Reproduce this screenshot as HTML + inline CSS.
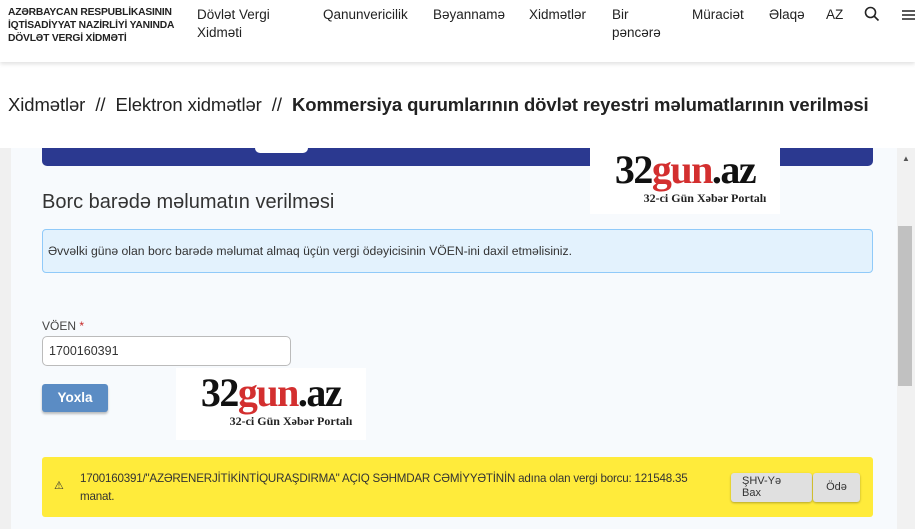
<!DOCTYPE html>
<html><head><meta charset="utf-8"><style>
*{margin:0;padding:0;box-sizing:border-box}
body{width:915px;height:529px;overflow:hidden;background:#fff;font-family:"Liberation Sans",sans-serif;position:relative;color:#333}
.abs{position:absolute}
.hdr{left:0;top:0;width:915px;height:62px;background:#fff;box-shadow:0 2px 4px rgba(0,0,0,.12);z-index:3}
.logo{left:8px;top:6px;font-size:10.3px;font-weight:bold;line-height:13px;color:#222;letter-spacing:-.2px}
.nav{font-size:13.5px;color:#222;line-height:18px;top:6px}
.bc{left:8px;top:94px;font-size:18.5px;color:#222;white-space:nowrap;letter-spacing:-.1px}
.gray{left:0;top:148px;width:11px;height:381px;background:#f0f0f0}
.panel{left:11px;top:148px;width:886px;height:381px;background:#f7fafd}
.sb{left:897px;top:148px;width:18px;height:381px;background:#f1f1f1}
.wm{background:#fff;text-align:center;font-family:"Liberation Serif",serif}
.wm b{font-size:40px;line-height:42px;display:block;color:#111;letter-spacing:-1.5px}
.wm b span{color:#d32f2f}
.wm i{font-style:normal;font-size:12px;font-weight:bold;color:#222;display:block;padding-left:40px}
</style></head><body>
<div class="abs hdr">
 <div class="abs logo">AZƏRBAYCAN RESPUBLİKASININ<br>İQTİSADİYYAT NAZİRLİYİ YANINDA<br>DÖVLƏT VERGİ XİDMƏTİ</div>
 <div class="abs nav" style="left:197px">Dövlət Vergi<br>Xidməti</div>
 <div class="abs nav" style="left:323px">Qanunvericilik</div>
 <div class="abs nav" style="left:433px">Bəyannamə</div>
 <div class="abs nav" style="left:529px">Xidmətlər</div>
 <div class="abs nav" style="left:612px">Bir<br>pəncərə</div>
 <div class="abs nav" style="left:692px">Müraciət</div>
 <div class="abs nav" style="left:769px">Əlaqə</div>
 <div class="abs nav" style="left:826px">AZ</div>
 <svg class="abs" style="left:864px;top:6px" width="16" height="16" viewBox="0 0 16 16"><circle cx="6.5" cy="6.5" r="5" fill="none" stroke="#222" stroke-width="1.6"/><path d="M10 10l4.5 4.5" stroke="#222" stroke-width="1.6"/></svg>
 <svg class="abs" style="left:902px;top:9px" width="13" height="12"><path d="M0 2h13M0 6h13M0 10h13" stroke="#222" stroke-width="1.4"/></svg>
</div>
<div class="abs bc">Xidmətlər &nbsp;// &nbsp;Elektron xidmətlər &nbsp;// &nbsp;<b>Kommersiya qurumlarının dövlət reyestri məlumatlarının verilməsi</b></div>
<div class="abs gray"></div>
<div class="abs panel"></div>
<div class="abs sb"><div class="abs" style="left:5px;top:6px;font-size:8px;color:#555">▲</div><div class="abs" style="left:1px;top:78px;width:14px;height:160px;background:#c1c1c1"></div></div>
<div class="abs" style="left:42px;top:148px;width:831px;height:18px;background:#2b3990;border-radius:0 0 5px 5px"></div>
<div class="abs" style="left:255px;top:148px;width:53px;height:5px;background:#fff;border-radius:0 0 6px 6px"></div>
<div class="abs wm" style="left:590px;top:148px;width:190px;height:66px;padding-top:1px"><b>32<span>gun</span>.az</b><i>32-ci Gün Xəbər Portalı</i></div>
<div class="abs" style="left:42px;top:191px;font-size:20px;color:#333">Borc barədə məlumatın verilməsi</div>
<div class="abs" style="left:42px;top:229px;width:831px;height:44px;background:#e3f2fd;border:1px solid #90caf9;border-radius:4px;font-size:12.2px;padding:14px 0 0 5px;color:#333">Əvvəlki günə olan borc barədə məlumat almaq üçün vergi ödəyicisinin VÖEN-ini daxil etməlisiniz.</div>
<div class="abs" style="left:42px;top:319px;font-size:12px;color:#444">VÖEN <span style="color:#c62828">*</span></div>
<div class="abs" style="left:42px;top:336px;width:249px;height:30px;border:1px solid #bbb;border-radius:5px;background:#fff;font-size:12.5px;padding:7px 0 0 6px">1700160391</div>
<div class="abs" style="left:42px;top:384px;width:66px;height:28px;background:#5b8cc4;border-radius:3px;color:#fff;font-size:13.5px;font-weight:bold;text-align:center;line-height:28px;box-shadow:0 2px 2px rgba(0,0,0,.25)">Yoxla</div>
<div class="abs wm" style="left:176px;top:368px;width:190px;height:72px;padding-top:4px"><b>32<span>gun</span>.az</b><i>32-ci Gün Xəbər Portalı</i></div>
<div class="abs" style="left:42px;top:457px;width:831px;height:60px;background:#ffeb3b;border-radius:3px"></div>
<div class="abs" style="left:54px;top:479px;font-size:11px">⚠</div>
<div class="abs" style="left:80px;top:470px;font-size:11.6px;line-height:18px;color:#333;width:632px;letter-spacing:-.2px">1700160391/"AZƏRENERJİTİKİNTİQURAŞDIRMA" AÇIQ SƏHMDAR CƏMİYYƏTİNİN adına olan vergi borcu: 121548.35 manat.</div>
<div class="abs" style="left:731px;top:473px;width:81px;height:29px;background:#e0e0e0;border-radius:3px;font-size:11px;line-height:12px;padding:2px 0 0 11px;box-shadow:0 1px 2px rgba(0,0,0,.3)">ŞHV-Yə<br>Bax</div>
<div class="abs" style="left:813px;top:473px;width:47px;height:29px;background:#e0e0e0;border-radius:3px;font-size:11px;line-height:29px;text-align:center;box-shadow:0 1px 2px rgba(0,0,0,.3)">Ödə</div>
</body></html>
